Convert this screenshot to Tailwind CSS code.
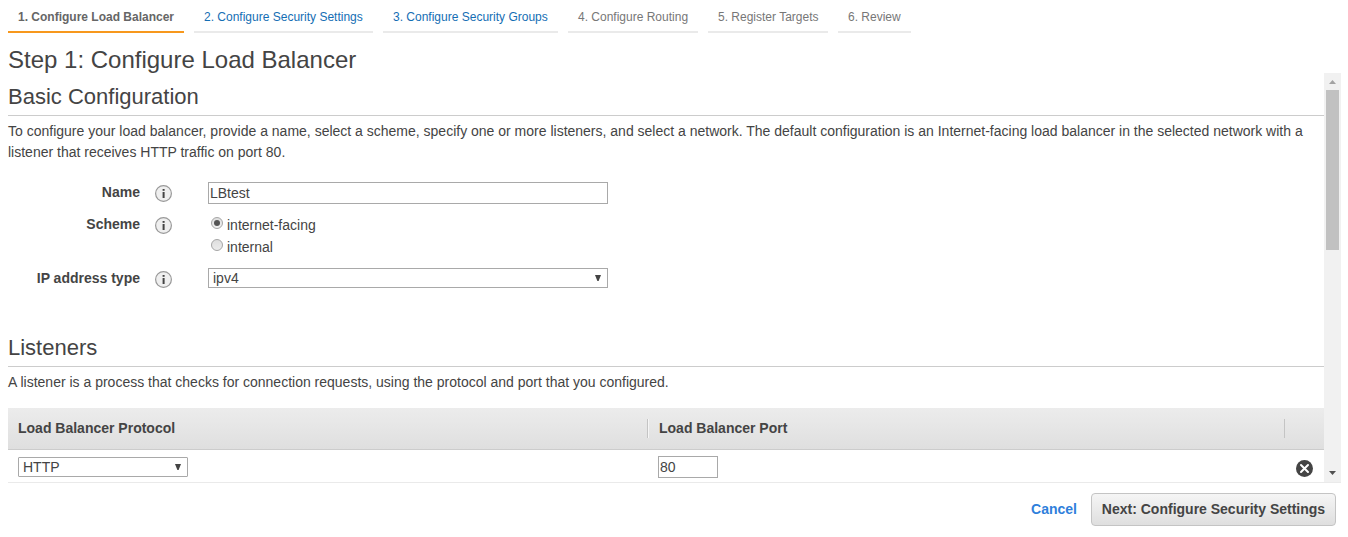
<!DOCTYPE html>
<html lang="en">
<head>
<meta charset="utf-8">
<title>Configure Load Balancer</title>
<script src="https://cdn.jsdelivr.net/npm/@tailwindcss/browser@4"></script>
</head>
<body class="h-[537px] overflow-hidden bg-white font-['Liberation_Sans',Arial,sans-serif] text-sm text-[#444] [font-variant-ligatures:none]">
<svg class="hidden">
  <symbol id="info" viewBox="0 0 17 17">
    <circle cx="8.5" cy="8.5" r="7.9" fill="#efefef" stroke="#999" stroke-width="1.2"/>
    <rect x="7.6" y="4" width="2" height="1.8" fill="#444"/>
    <rect x="7.6" y="7" width="2" height="6" fill="#444"/>
  </symbol>
  <symbol id="caret" viewBox="0 0 6 6"><path d="M0 0h6L3.6 6H2.4z" fill="#444"/></symbol>
</svg>
<nav class="flex h-[33px] gap-2.5 pl-2 text-xs leading-[14px] whitespace-nowrap text-[#777]">
  <div class="w-[176px] border-b-2 border-[#f7981d] pt-2.5 pl-2.5 font-bold text-[#666]">1. Configure Load Balancer</div>
  <div class="w-[179px] border-b-2 border-[#eaeaea] pt-2.5 pl-2.5 text-[#146eb4]">2. Configure Security Settings</div>
  <div class="w-[175px] border-b-2 border-[#eaeaea] pt-2.5 pl-2.5 text-[#146eb4]">3. Configure Security Groups</div>
  <div class="w-[130px] border-b-2 border-[#eaeaea] pt-2.5 pl-2.5">4. Configure Routing</div>
  <div class="w-[120px] border-b-2 border-[#eaeaea] pt-2.5 pl-2.5">5. Register Targets</div>
  <div class="w-[73px] border-b-2 border-[#eaeaea] pt-2.5 pl-2.5">6. Review</div>
</nav>
<h1 class="h-10 pt-[13px] pl-2 text-2xl leading-7">Step 1: Configure Load Balancer</h1>
<div class="ml-2 flex h-[410px] w-[1333px] border-b border-[#eaeaea]">
  <main class="w-[1316px]">
    <h2 class="h-[43px] border-b border-[#ccc] pt-[11px] text-[22px] leading-[26px]">Basic Configuration</h2>
    <p class="mt-[5px] leading-[21px]">To configure your load balancer, provide a name, select a scheme, specify one or more listeners, and select a network. The default configuration is an Internet-facing load balancer in the selected network with a<br>listener that receives HTTP traffic on port 80.</p>
    <div class="mt-[19px] flex h-8">
      <div class="w-[132px] pt-0.5 text-right leading-4 font-bold">Name</div>
      <svg class="mt-[3px] ml-[15px] size-[17px]"><use href="#info"/></svg>
      <div class="ml-9 h-[22px] w-[400px] border border-[#a9a9a9] pl-px leading-5">LBtest</div>
    </div>
    <div class="flex h-[54px]">
      <div class="w-[132px] pt-0.5 text-right leading-4 font-bold">Scheme</div>
      <svg class="mt-[3px] ml-[15px] size-[17px]"><use href="#info"/></svg>
      <div class="ml-[39px] leading-[22px]">
        <div class="flex">
          <span class="mt-[3px] mr-1 flex size-3 items-center justify-center rounded-full border border-[#a5a5a5] bg-linear-to-b from-[#dedede] to-[#f1f1f1]"><span class="size-1.5 rounded-full bg-[#555]"></span></span>internet-facing
        </div>
        <div class="flex">
          <span class="mt-[3px] mr-1 size-3 rounded-full border border-[#a5a5a5] bg-linear-to-b from-[#dedede] to-[#ececec]"></span>internal
        </div>
      </div>
    </div>
    <div class="flex h-[60px]">
      <div class="w-[132px] pt-0.5 text-right leading-4 font-bold">IP address type</div>
      <svg class="mt-[3px] ml-[15px] size-[17px]"><use href="#info"/></svg>
      <div class="ml-9 flex h-5 w-[400px] items-center justify-between border border-[#a9a9a9] pr-1.5 pl-1 leading-[18px]">ipv4<svg class="size-1.5"><use href="#caret"/></svg></div>
    </div>
    <h2 class="h-[39px] border-b border-[#ccc] pt-[7px] text-[22px] leading-[26px]">Listeners</h2>
    <p class="mt-[5px] h-9 leading-[21px]">A listener is a process that checks for connection requests, using the protocol and port that you configured.</p>
    <div class="flex h-[42px] items-center border-b border-[#ccc] bg-linear-to-b from-[#ececec] to-[#dfdfdf] font-bold">
      <div class="w-[639px] pb-0.5 pl-2.5">Load Balancer Protocol</div>
      <div class="flex h-[19px] w-[637px] items-center border-l border-[#c4c4c4] pb-0.5 pl-[11px] shadow-[inset_1px_0_0_#f5f5f5]">Load Balancer Port</div>
      <div class="h-[19px] w-px bg-[#c4c4c4]"></div>
    </div>
    <div class="flex h-8">
      <div class="mt-[7px] ml-2.5 flex h-5 w-[170px] items-center justify-between rounded-[1px] border border-[#a9a9a9] pr-1.5 pl-1 leading-[18px]">HTTP<svg class="size-1.5"><use href="#caret"/></svg></div>
      <div class="mt-1.5 ml-[470px] h-[22px] w-[60px] border border-[#a9a9a9] pl-px leading-5">80</div>
      <svg class="mt-2.5 ml-[578px] size-[17px]" viewBox="0 0 17 17"><circle cx="8.5" cy="8.5" r="8.5" fill="#444"/><path d="M5 5l7 7M12 5l-7 7" stroke="#fff" stroke-width="2" stroke-linecap="round"/></svg>
    </div>
  </main>
  <div class="flex w-[17px] flex-col items-center bg-[#f1f1f1]">
    <svg class="mt-[7px] h-1 w-[7px]" viewBox="0 0 7 4"><path d="M0 4L3.5 0 7 4z" fill="#a3a3a3"/></svg>
    <div class="mt-1.5 h-40 w-[13px] bg-[#c1c1c1]"></div>
    <svg class="mt-auto mb-[7px] h-1 w-[7px]" viewBox="0 0 7 4"><path d="M0 0h7L3.5 4z" fill="#505050"/></svg>
  </div>
</div>
<footer class="flex justify-end pt-2.5 pr-3 font-bold">
  <a class="mr-3.5 leading-8 text-[#2f7fdb]">Cancel</a>
  <button class="h-[33px] w-[245px] rounded border border-[#c4c4c4] bg-linear-to-b from-[#f5f5f5] to-[#dfdfdf] pb-0.5 whitespace-nowrap">Next: Configure Security Settings</button>
</footer>
</body>
</html>
